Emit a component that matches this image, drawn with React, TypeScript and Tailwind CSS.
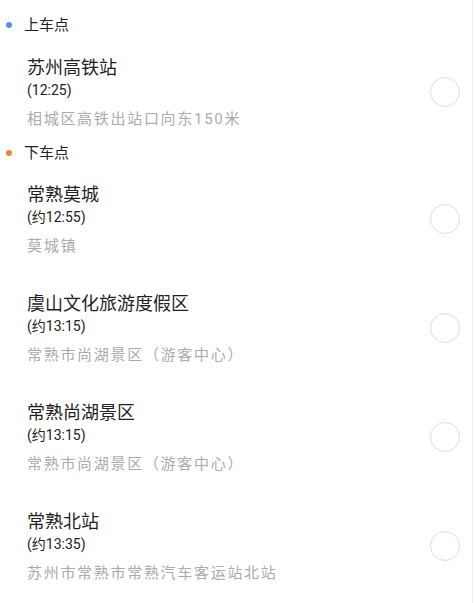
import React from 'react';

type Stop = {
  name: string;
  time: string;
  address: string;
};

const pickup: Stop[] = [
  { name: '苏州高铁站', time: '(12:25)', address: '相城区高铁出站口向东150米' },
];

const dropoff: Stop[] = [
  { name: '常熟莫城', time: '(约12:55)', address: '莫城镇' },
  { name: '虞山文化旅游度假区', time: '(约13:15)', address: '常熟市尚湖景区（游客中心）' },
  { name: '常熟尚湖景区', time: '(约13:15)', address: '常熟市尚湖景区（游客中心）' },
  { name: '常熟北站', time: '(约13:35)', address: '苏州市常熟市常熟汽车客运站北站' },
];

function SectionHeader({ label, dot }: { label: string; dot: string }) {
  return (
    <div className="flex h-[28px] items-center pl-[6px]">
      <span className={`h-[6px] w-[6px] rounded-full ${dot}`} />
      <span className="ml-[12px] text-[15px] leading-[22px] text-[#222]">{label}</span>
    </div>
  );
}

function StopRow({ stop, first }: { stop: Stop; first?: boolean }) {
  return (
    <div className={`flex items-center pl-[27px] pr-[12px] ${first ? 'pt-[18px] pb-[9px]' : 'pt-[17px] pb-[19px]'}`}>
      <div className="flex-1">
        <div className="text-[18px] leading-[22px] text-[#1f1f1f]">{stop.name}</div>
        <div className="text-[14px] leading-[22px] text-[#222]">{stop.time}</div>
        <div className="mt-[7px] text-[15px] leading-[22px] tracking-[1.7px] text-[#ababab]">
          {stop.address}
        </div>
      </div>
      <div className="mb-[4px] h-[30px] w-[30px] rounded-full border-[1.5px] border-[#dedede]" />
    </div>
  );
}

export default function App() {
  return (
    <div
      className="min-h-[603px] w-[473px] border-r border-[#f0f0f0] bg-white pt-[11px]"
      style={{ fontFamily: 'Roboto, "Noto Sans CJK SC", sans-serif' }}
    >
      <SectionHeader label="上车点" dot="bg-[#4f94ec]" />
      {pickup.map((s) => (
        <StopRow key={s.name} stop={s} first />
      ))}
      <SectionHeader label="下车点" dot="bg-[#f4843a]" />
      {dropoff.map((s) => (
        <StopRow key={s.name} stop={s} />
      ))}
    </div>
  );
}
